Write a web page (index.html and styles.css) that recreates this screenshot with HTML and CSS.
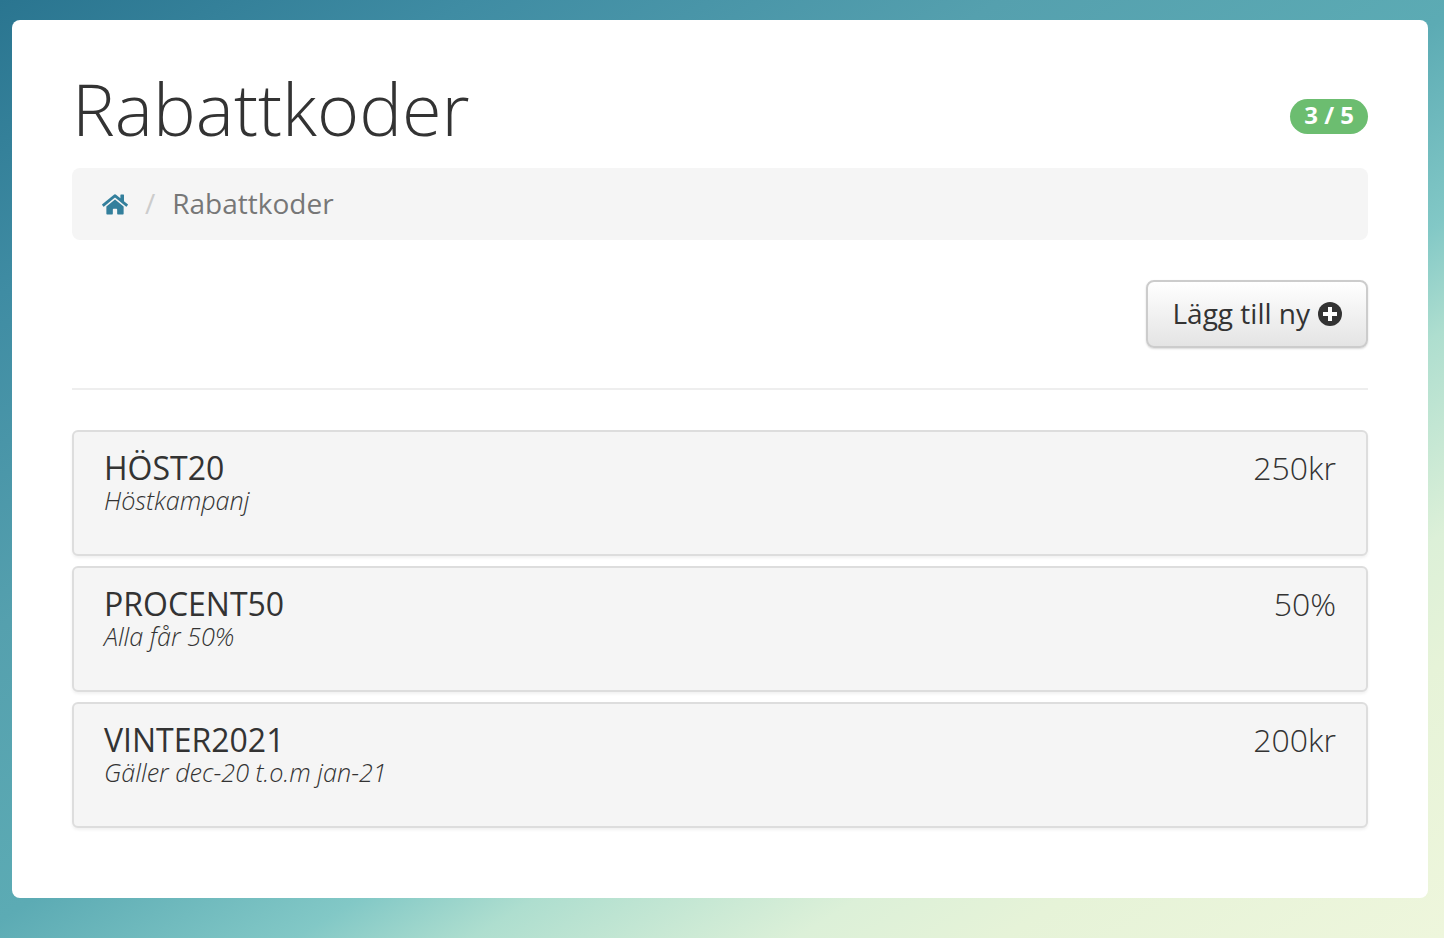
FILE: index.html
```html
<!DOCTYPE html>
<html lang="sv">
<head>
<meta charset="utf-8">
<title>Rabattkoder</title>
<link rel="stylesheet" href="styles.css">
</head>
<body>
<main class="card">
  <header class="head">
    <h1 class="title">Rabattkoder</h1>
    <span class="badge">3 / 5</span>
  </header>
  <nav class="crumbs">
    <svg class="home" viewBox="0 0 576 512" aria-hidden="true"><path d="M280.37 148.26L96 300.11V464a16 16 0 0 0 16 16l112.06-.29a16 16 0 0 0 15.92-16V368a16 16 0 0 1 16-16h64a16 16 0 0 1 16 16v95.64a16 16 0 0 0 16 16.05L464 480a16 16 0 0 0 16-16V300L295.67 148.26a12.19 12.19 0 0 0-15.3 0zM571.6 251.47L488 182.56V44.05a12 12 0 0 0-12-12h-56a12 12 0 0 0-12 12v72.61L318.47 43a48 48 0 0 0-61 0L4.34 251.47a12 12 0 0 0-1.6 16.9l25.5 31A12 12 0 0 0 45.15 301l235.22-193.74a12.19 12.19 0 0 1 15.3 0L530.9 301a12 12 0 0 0 16.9-1.6l25.5-31a12 12 0 0 0-1.7-16.93z"/></svg>
    <span class="sep">/</span>
    <span class="current">Rabattkoder</span>
  </nav>
  <div class="actions">
    <button class="btn" type="button"><span class="btn-label">Lägg till ny</span>
      <svg class="plus" viewBox="0 0 24 24" aria-hidden="true"><circle cx="12" cy="12" r="12"/><path class="plus-mark" d="M10 5h4v5h5v4h-5v5h-4v-5H5v-4h5z"/></svg>
    </button>
  </div>
  <hr class="rule">
  <ul class="list">
    <li class="item">
      <div><div class="code">HÖST20</div><div class="desc">Höstkampanj</div></div>
      <div class="value">250kr</div>
    </li>
    <li class="item">
      <div><div class="code">PROCENT50</div><div class="desc">Alla får 50%</div></div>
      <div class="value">50%</div>
    </li>
    <li class="item">
      <div><div class="code">VINTER2021</div><div class="desc">Gäller dec-20 t.o.m jan-21</div></div>
      <div class="value">200kr</div>
    </li>
  </ul>
</main>
</body>
</html>
```
FILE: styles.css
```css
* { box-sizing: border-box; }
html, body { height: 100%; }
body {
  margin: 0;
  padding: 20px 16px 40px 12px;
  font-family: "Open Sans", "Liberation Sans", sans-serif;
  color: #333;
  background: linear-gradient(148deg, #2a7590 0%, #3f8ca3 16%, #55a0ae 34%, #5cabb4 50%, #82c8c6 61%, #aedecf 67%, #dcf0d8 78%, #e6f3d8 85%, #eef6dc 100%);
}
.card {
  height: 878px;
  background: #fff;
  border-radius: 8px;
  padding: 40px 60px 0;
}
.head {
  display: flex;
  justify-content: space-between;
  align-items: flex-start;
  height: 108px;
}
.title {
  margin: 0;
  font-size: 72px;
  font-weight: 300;
  line-height: 96px;
}
.badge {
  margin-top: 39px;
  height: 35px;
  line-height: 31px;
  padding: 0 14px;
  border-radius: 18px;
  background: #6cbd70;
  color: #fff;
  font-size: 24px;
  font-weight: 700;
}
.crumbs {
  display: flex;
  align-items: center;
  height: 72px;
  padding: 0 30px 2px;
  background: #f5f5f5;
  border-radius: 8px;
  font-size: 28px;
}
.home { width: 26px; height: 23px; fill: #337f9c; margin-top: 2px; }
.sep { margin: 0 17px; color: #ccc; }
.current { color: #777; }
.actions {
  display: flex;
  justify-content: flex-end;
  margin-top: 40px;
}
.btn {
  display: flex;
  align-items: center;
  gap: 8px;
  height: 68px;
  padding: 0 24px;
  border: 2px solid #ccc;
  border-radius: 8px;
  background: linear-gradient(#fff, #e4e4e4);
  box-shadow: 0 1px 2px rgba(0,0,0,.15);
  color: #333;
  font: 400 28px "Open Sans", "Liberation Sans", sans-serif;
}
.btn-label { margin-top: -2px; }
.plus { width: 24px; height: 24px; fill: #333; }
.plus-mark { fill: #fff; }
.rule {
  margin: 40px 0 40px;
  border: 0;
  border-top: 2px solid #eee;
}
.list { list-style: none; margin: 0; padding: 0; }
.item {
  display: flex;
  justify-content: space-between;
  height: 126px;
  margin-bottom: 10px;
  padding: 16px 30px 0;
  background: #f5f5f5;
  border: 2px solid #ddd;
  border-radius: 6px;
  box-shadow: 0 2px 3px rgba(0,0,0,.06);
}
.code { font-size: 32px; line-height: 40px; color: #333; }
.desc { font-size: 25.2px; font-weight: 300; font-style: italic; line-height: 26px; margin-top: -1px; }
.value { font-size: 32px; font-weight: 300; line-height: 39px; }
```
